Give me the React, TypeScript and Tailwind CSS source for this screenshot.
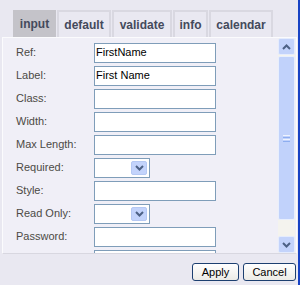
import React from "react";

const tabs = [
    { name: "input", w: "w-[43px]" },
    { name: "default", w: "w-[54px]" },
    { name: "validate", w: "w-[60px]" },
    { name: "info", w: "w-[35px]" },
    { name: "calendar", w: "w-[64px]" },
];

type Row = { label: string; kind: "text" | "select"; value?: string };

const rows: Row[] = [
    { label: "Ref:", kind: "text", value: "FirstName" },
    { label: "Label:", kind: "text", value: "First Name" },
    { label: "Class:", kind: "text" },
    { label: "Width:", kind: "text" },
    { label: "Max Length:", kind: "text" },
    { label: "Required:", kind: "select" },
    { label: "Style:", kind: "text" },
    { label: "Read Only:", kind: "select" },
    { label: "Password:", kind: "text" },
    { label: "Error Message:", kind: "text" },
];

function Chevron({ up }: { up?: boolean }) {
    return (
        <svg width="9" height="6" viewBox="0 0 9 6">
            <path d={up ? "M1 5 L4.5 1.5 L8 5" : "M1 1 L4.5 4.5 L8 1"} fill="none" stroke="#4d6185" strokeWidth="2" />
        </svg>
    );
}

function SelectBox() {
    return (
        <div className="w-[56px] h-[20px] border border-[#7f9db9] bg-white flex items-center justify-end pr-[2px]">
            <div className="w-[16px] h-[14px] rounded-[2px] bg-[#c3d3fb] border border-[#b5c8f3] flex items-center justify-center">
                <Chevron />
            </div>
        </div>
    );
}

function ScrollBar() {
    return (
        <div className="w-[17px] h-full flex flex-col bg-[#f4f3ee]">
            <div className="h-[17px] rounded-[2px] bg-[#c3d3fb] border border-[#e5ecfd] flex items-center justify-center">
                <Chevron up />
            </div>
            <div className="h-[164px] mt-[1px] rounded-[2px] bg-[#c1d2fb] border border-[#e8effd] flex items-center justify-center">
                <div className="flex flex-col gap-[1px]">
                    <div className="w-[7px] h-[1px] bg-[#eef3fe]" />
                    <div className="w-[7px] h-[1px] bg-[#8eaef0]" />
                    <div className="w-[7px] h-[1px] bg-[#eef3fe]" />
                    <div className="w-[7px] h-[1px] bg-[#8eaef0]" />
                </div>
            </div>
            <div className="flex-1" />
            <div className="h-[17px] rounded-[2px] bg-[#c3d3fb] border border-[#e5ecfd] flex items-center justify-center">
                <Chevron />
            </div>
        </div>
    );
}

export default function App() {
    return (
        <div
            className="w-[300px] h-[285px] bg-[#e9e8f1] border-r-2 border-[#1742c4] flex flex-col overflow-hidden"
            style={{ fontFamily: '"Liberation Sans", Arial, sans-serif' }}
        >
            {/* tabs */}
            <div className="flex pl-[13px] pt-[10px] h-[37px]">
                {tabs.map((t, i) => (
                    <div
                        key={t.name}
                        className={
                            i == 0
                                ? t.w + " h-[27px] flex items-center justify-center bg-[#c4c3c9] text-[12px] font-bold text-[#444a5c] mr-[1px]"
                                : t.w + " h-[27px] flex items-center justify-center border-2 border-b-0 border-[#d9d8e1] text-[12px] font-bold text-[#444a5c] mr-[1px]"
                        }
                    >
                        {t.name}
                    </div>
                ))}
            </div>

            {/* panel */}
            <div className="ml-[2px] mr-[1px] h-[217px] bg-[#f0eff7] border border-[#fbfbfd] border-b-[#d8d7e0] flex">
                <div className="flex-1 overflow-hidden pt-[3px] pl-[13px]">
                    {rows.map((r) => (
                        <div key={r.label} className="flex items-center h-[23px]">
                            <div className="w-[78px] text-[11px] text-[#4c4a45] whitespace-nowrap">{r.label}</div>
                            {r.kind == "text" ? (
                                <div className="w-[122px] h-[20px] border border-[#7f9db9] bg-white text-[11px] text-black pl-[1px] flex items-center">
                                    {r.value}
                                </div>
                            ) : (
                                <SelectBox />
                            )}
                        </div>
                    ))}
                </div>
                <div className="pr-[1px]">
                    <ScrollBar />
                </div>
            </div>

            {/* buttons */}
            <div className="flex justify-end gap-[4px] pr-[2px] pt-[9px]">
                <button className="w-[47px] h-[18px] rounded-[3px] border border-[#1c3f70] bg-gradient-to-b from-white to-[#ecebe6] text-[11px] text-black leading-none">
                    Apply
                </button>
                <button className="w-[53px] h-[18px] rounded-[3px] border border-[#1c3f70] bg-gradient-to-b from-white to-[#ecebe6] text-[11px] text-black leading-none">
                    Cancel
                </button>
            </div>
        </div>
    );
}
